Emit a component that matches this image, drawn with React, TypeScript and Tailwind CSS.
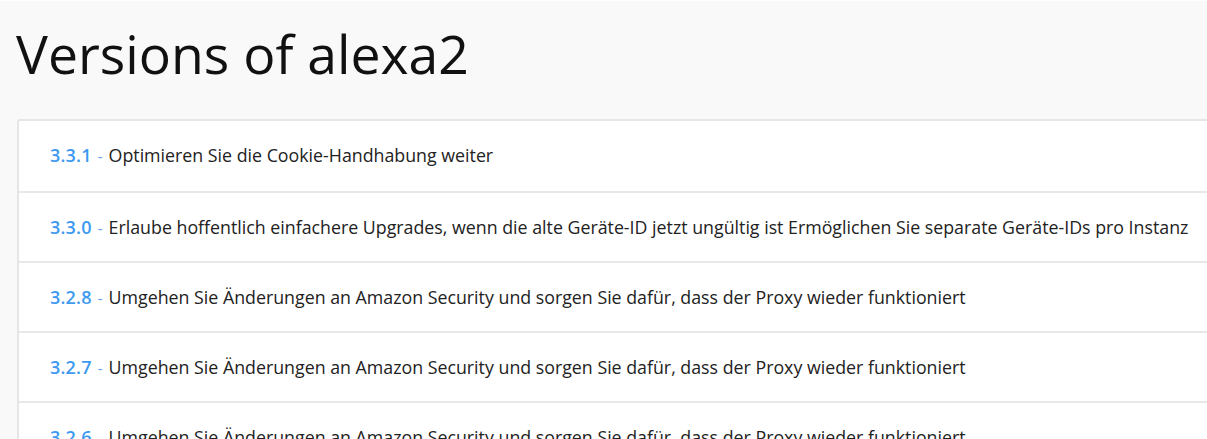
const versions = [
  { v: "3.3.1", text: "Optimieren Sie die Cookie-Handhabung weiter" },
  {
    v: "3.3.0",
    text: "Erlaube hoffentlich einfachere Upgrades, wenn die alte Geräte-ID jetzt ungültig ist Ermöglichen Sie separate Geräte-IDs pro Instanz",
  },
  { v: "3.2.8", text: "Umgehen Sie Änderungen an Amazon Security und sorgen Sie dafür, dass der Proxy wieder funktioniert" },
  { v: "3.2.7", text: "Umgehen Sie Änderungen an Amazon Security und sorgen Sie dafür, dass der Proxy wieder funktioniert" },
  { v: "3.2.6", text: "Umgehen Sie Änderungen an Amazon Security und sorgen Sie dafür, dass der Proxy wieder funktioniert" },
];

export default function App() {
  return (
    <div className="h-[439px] w-[1207px] overflow-hidden border-t border-white bg-[#f9f9f9] font-['Open_Sans',sans-serif]">
      <h1 className="ml-[16px] mt-[18px] text-[53.5px] font-normal leading-[70px] text-[#111]">Versions of alexa2</h1>
      <div className="ml-[17px] mt-[30px] w-[1220px] rounded-[3px] border-2 border-[#e6e6e6] bg-white">
        {versions.map((item, i) => (
          <div
            key={item.v + i}
            className={
              "flex h-[70px] items-baseline whitespace-nowrap pl-[31px] pt-[21px] " +
              (i > 0 ? "border-t-2 border-[#e8e8e8]" : "")
            }
          >
            <span className="text-[18px] font-semibold tracking-[0.2px] text-[#3d9af0]">{item.v}</span>
            <span className="px-[6px] text-[15px] text-[#5a9fe6]">-</span>
            <span className="text-[17.8px] text-[#222]">{item.text}</span>
          </div>
        ))}
      </div>
    </div>
  );
}
